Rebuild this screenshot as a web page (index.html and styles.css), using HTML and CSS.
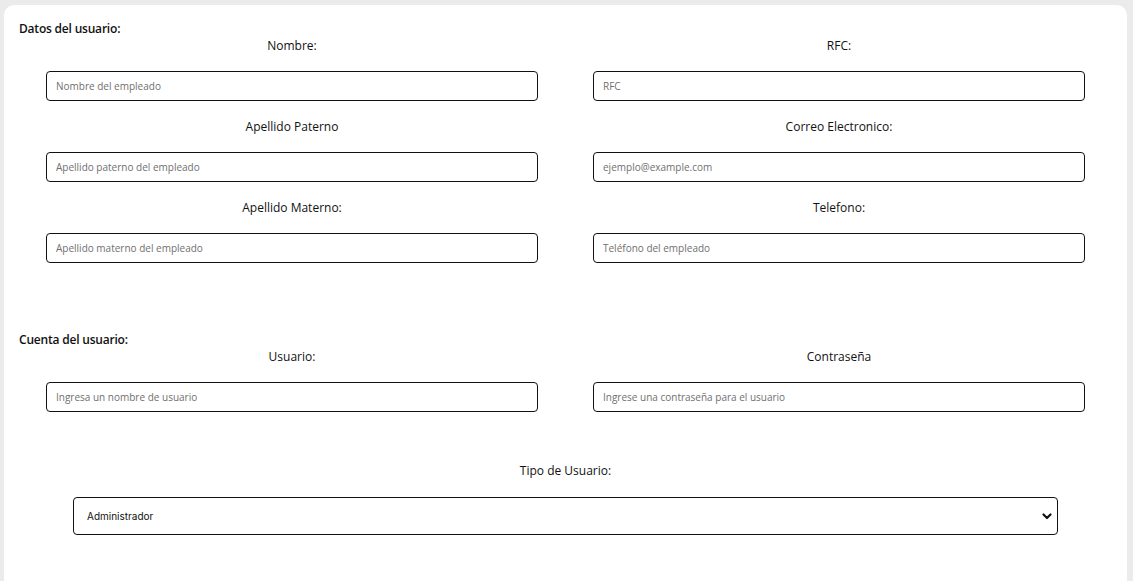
FILE: index.html
```html
<!DOCTYPE html>
<html lang="es">
<head>
<meta charset="utf-8">
<title>Usuario</title>
<link rel="stylesheet" href="styles.css">
</head>
<body>
<div class="card">
  <h2 class="section-title">Datos del usuario:</h2>
  <div class="grid">
    <div class="field">
      <label class="label">Nombre:</label>
      <input class="input" type="text" placeholder="Nombre del empleado">
    </div>
    <div class="field">
      <label class="label">RFC:</label>
      <input class="input" type="text" placeholder="RFC">
    </div>
    <div class="field">
      <label class="label">Apellido Paterno</label>
      <input class="input" type="text" placeholder="Apellido paterno del empleado">
    </div>
    <div class="field">
      <label class="label">Correo Electronico:</label>
      <input class="input" type="text" placeholder="ejemplo@example.com">
    </div>
    <div class="field">
      <label class="label">Apellido Materno:</label>
      <input class="input" type="text" placeholder="Apellido materno del empleado">
    </div>
    <div class="field">
      <label class="label">Telefono:</label>
      <input class="input" type="text" placeholder="Teléfono del empleado">
    </div>
  </div>

  <h2 class="section-title second">Cuenta del usuario:</h2>
  <div class="grid">
    <div class="field">
      <label class="label">Usuario:</label>
      <input class="input" type="text" placeholder="Ingresa un nombre de usuario">
    </div>
    <div class="field">
      <label class="label">Contraseña</label>
      <input class="input" type="password" placeholder="Ingrese una contraseña para el usuario">
    </div>
  </div>

  <div class="type-field">
    <label class="label type-label">Tipo de Usuario:</label>
    <div class="select-wrap">
      <select class="select">
        <option>Administrador</option>
        <option>Empleado</option>
      </select>
      <svg class="chevron" width="10" height="7" viewBox="0 0 10 7" aria-hidden="true">
        <path d="M1.5 1.5 L5 5 L8.5 1.5" fill="none" stroke="#111" stroke-width="2.2" stroke-linecap="round" stroke-linejoin="round"/>
      </svg>
    </div>
  </div>
</div>
</body>
</html>
```

FILE: styles.css
```css
* { box-sizing: border-box; }

html, body {
  margin: 0;
  padding: 0;
  background: #ebebeb;
  font-family: "Open Sans", "Liberation Sans", sans-serif;
  color: #212529;
}

.card {
  margin: 5px 6px 0 4px;
  background: #ffffff;
  border-radius: 10px 10px 0 0;
  padding: 16px 15px 40px 15px;
  min-height: calc(100vh - 5px);
}

.section-title {
  margin: 0;
  font-size: 12px;
  font-weight: 600;
  letter-spacing: -0.2px;
  line-height: 16px;
  color: #111;
}

.section-title.second {
  margin-top: 69px;
}

.grid {
  display: grid;
  grid-template-columns: 1fr 1fr;
  column-gap: 55px;
  row-gap: 17px;
  padding: 0 27px;
}

.field {
  display: flex;
  flex-direction: column;
}

.label {
  display: block;
  text-align: center;
  font-size: 12px;
  line-height: 18px;
  margin-bottom: 16px;
  color: #111;
}

.input {
  height: 30px;
  width: 100%;
  border: 1px solid #111;
  border-radius: 4px;
  padding: 0 9px;
  font-family: "Open Sans", "Liberation Sans", sans-serif;
  font-size: 10px;
  color: #212529;
  background: #fff;
  outline: none;
}

.input::placeholder {
  color: #6f6f6f;
}

.type-field {
  margin-top: 50px;
  padding: 0 54px;
}

.type-label {
  margin-bottom: 17px;
}

.select-wrap {
  position: relative;
}

.select {
  appearance: none;
  -webkit-appearance: none;
  display: block;
  width: 100%;
  height: 38px;
  border: 1px solid #111;
  border-radius: 4px;
  padding: 0 13px;
  font-family: "Inter", "Open Sans", sans-serif;
  font-size: 10px;
  color: #111;
  background: #fff;
  outline: none;
}

.chevron {
  position: absolute;
  right: 6px;
  top: 16px;
  pointer-events: none;
}
```
